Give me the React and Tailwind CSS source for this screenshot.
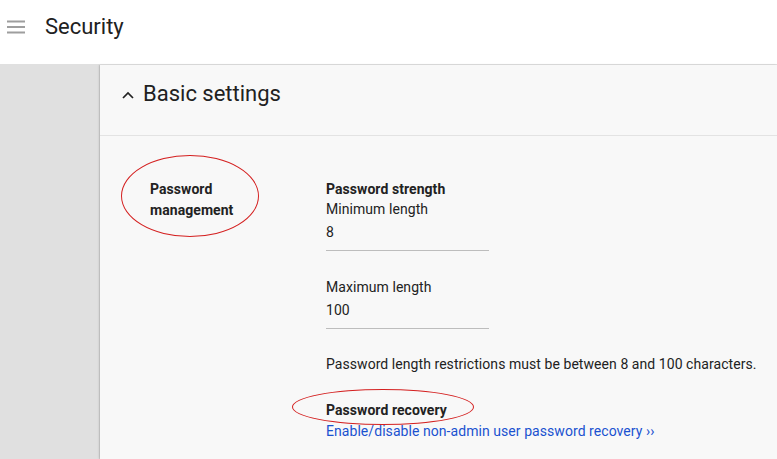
import React from 'react';

const font = { fontFamily: 'Roboto, "Noto Sans", Arial, sans-serif' };

function Field({ label, value }) {
  return (
    <div className="w-[163px]">
      <div className="text-[14px] leading-5 text-[#222]">{label}</div>
      <div className="mt-[3px] pb-[8px] text-[14px] leading-5 text-[#222] border-b border-[#bdbdbd]">{value}</div>
    </div>
  );
}

export default function App() {
  return (
    <div className="w-[777px] h-[459px] overflow-hidden bg-white tracking-[0.06px]" style={font}>
      <header className="h-[65px] flex items-start border-b border-[#e0e0e0] bg-white">
        <svg className="ml-[7px] mt-[20px]" width="18" height="14" viewBox="0 0 18 14">
          <rect x="0" y="0.5" width="18" height="2" fill="#9e9e9e" />
          <rect x="0" y="6" width="18" height="2" fill="#9e9e9e" />
          <rect x="0" y="11.5" width="18" height="2" fill="#9e9e9e" />
        </svg>
        <h1 className="ml-[20px] mt-[13px] text-[22px] leading-[28px] text-[#212121] tracking-normal">Security</h1>
      </header>

      <div className="flex h-[394px]">
        <aside className="w-[100px] bg-[#e0e0e0] border-r border-[#d0d0d0]" />
        <main className="flex-1 bg-[#f8f8f8] shadow-[-1px_0_2px_rgba(0,0,0,0.12)]">
          <div className="h-[71px] flex items-start border-b border-[#e3e3e3] pl-[21px]">
            <svg width="14" height="10" viewBox="0 0 14 10" className="mt-[25px]">
              <path d="M2 8 L7 3 L12 8" stroke="#222" strokeWidth="1.7" fill="none" />
            </svg>
            <h2 className="ml-[8px] mt-[15px] text-[22px] leading-[28px] text-[#212121] tracking-normal">Basic settings</h2>
          </div>

          <div className="flex pt-[43px] pl-[50px]">
            <div className="relative w-[176px]">
              <div className="text-[14px] leading-[21px] font-bold text-[#222]">
                Password
                <br />
                management
              </div>
              <div className="absolute left-[-29px] top-[-24px] w-[138px] h-[82px] rounded-[50%] border border-[#d42020]" />
            </div>

            <div className="flex flex-col">
              <div className="text-[14px] leading-5 font-bold text-[#222]">Password strength</div>
              <Field label="Minimum length" value="8" />
              <div className="mt-[26px]">
                <Field label="Maximum length" value="100" />
              </div>
              <p className="mt-[25px] text-[14px] leading-5 text-[#222]">
                Password length restrictions must be between 8 and 100 characters.
              </p>
              <div className="relative mt-[26px]">
                <div className="text-[14px] leading-5 font-bold text-[#222]">Password recovery</div>
                <div className="absolute left-[-34px] top-[-11px] w-[182px] h-[36px] rounded-[50%] border border-[#d42020]" />
              </div>
              <a className="text-[14px] leading-5 text-[#1a52d0] mt-[1px]">
                Enable/disable non-admin user password recovery ››
              </a>
            </div>
          </div>
        </main>
      </div>
    </div>
  );
}
